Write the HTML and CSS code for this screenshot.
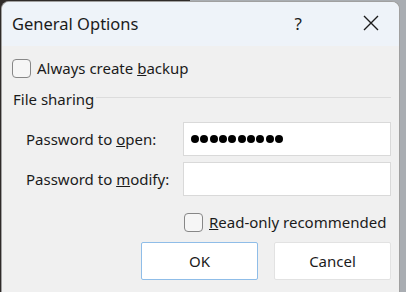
FILE: index.html
```html
<!DOCTYPE html>
<html lang="en">
<head>
  <meta charset="UTF-8" />
  <title>General Options</title>
  <link rel="stylesheet" href="styles.css">
</head>
<body>
  <div class="dialog">
    <div class="titlebar">
      <span class="title">General Options</span>
      <span class="help">?</span>
      <svg class="close" width="18" height="18" viewBox="0 0 18 18">
        <path d="M2 2 L16 16 M16 2 L2 16" stroke="#1b1b1b" stroke-width="1.4" fill="none"/>
      </svg>
    </div>
    <div class="content">
      <label class="check-row">
        <span class="box"></span>
        <span>Always create <u>b</u>ackup</span>
      </label>
      <div class="group-head">
        <span>File sharing</span>
        <span class="rule"></span>
      </div>
      <div class="field">
        <span class="label">Password to <u>o</u>pen:</span>
        <div class="input">
          <span class="dot"></span><span class="dot"></span><span class="dot"></span><span class="dot"></span><span class="dot"></span><span class="dot"></span><span class="dot"></span><span class="dot"></span><span class="dot"></span><span class="dot"></span>
        </div>
      </div>
      <div class="field">
        <span class="label">Password to <u>m</u>odify:</span>
        <div class="input"></div>
      </div>
      <label class="check-row readonly">
        <span class="box"></span>
        <span><u>R</u>ead-only recommended</span>
      </label>
      <div class="buttons">
        <button class="btn primary">OK</button>
        <button class="btn">Cancel</button>
      </div>
    </div>
  </div>
</body>
</html>
```

FILE: styles.css
```css
body {
  margin: 0;
  height: 292px;
  overflow: hidden;
  background: linear-gradient(to right, #2f2b29 0, #2f2b29 190px, #a9adb2 190px);
  font-family: 'Noto Sans', sans-serif;
  color: #1b1b1b;
}
.dialog {
  margin: 1px 0 0 1px;
  width: 399px;
  height: 291px;
  background: #f0f0f0;
  border: 1px solid #a0a0a0;
  border-bottom: none;
  border-radius: 8px 8px 0 0;
  overflow: hidden;
  box-sizing: border-box;
}
.titlebar {
  height: 42px;
  background: #eef3f9;
  display: flex;
  align-items: center;
  padding: 0 0 2px 10px;
}
.title {
  font-size: 16.5px;
  flex: 1;
}
.help {
  font-size: 17px;
  margin-right: 60px;
}
.close {
  margin-right: 19px;
}
.content {
  padding: 12px 8px 0 10px;
  font-size: 15px;
}
.check-row {
  display: flex;
  align-items: center;
  gap: 6px;
}
.box {
  width: 17px;
  height: 17px;
  border: 1px solid #878787;
  border-radius: 4px;
  background: #f6f6f6;
}
.group-head {
  display: flex;
  align-items: center;
  gap: 2px;
  margin: 11px 0 0 1px;
}
.rule {
  flex: 1;
  height: 1px;
  background: #dcdcdc;
  margin-bottom: 3px;
}
.field {
  display: flex;
  align-items: center;
  margin-left: 14px;
  margin-top: 13px;
}
.field + .field {
  margin-top: 6px;
}
.field .label {
  width: 158px;
}
.input {
  width: 200px;
  height: 32px;
  background: #fff;
  border: 1px solid #d9d9d9;
  display: flex;
  align-items: center;
  gap: 1.3px;
  padding-left: 7px;
}
.dot {
  width: 8px;
  height: 8px;
  border-radius: 50%;
  background: #000;
}
.readonly {
  margin: 16px 0 0 172px;
}
.buttons {
  display: flex;
  gap: 16px;
  margin: 10px 0 0 129px;
}
.btn {
  width: 118px;
  height: 38px;
  background: #fff;
  border: 1px solid #e2e2e2;
  border-radius: 2px;
  font-family: 'Noto Sans', sans-serif;
  font-size: 15px;
  color: #1b1b1b;
}
.btn.primary {
  border-color: #8fbde8;
}
```
